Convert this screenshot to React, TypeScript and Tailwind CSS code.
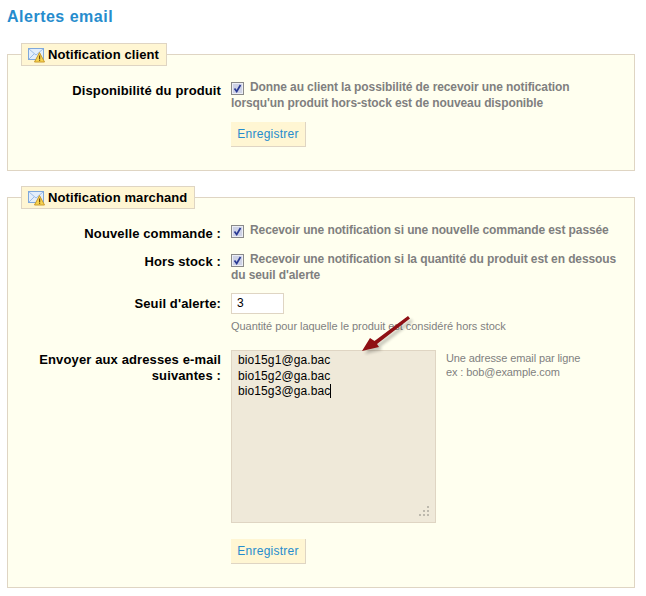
import React from 'react';

function MailWarnIcon() {
  return (
    <svg width="17" height="16" viewBox="0 0 17 16" className="shrink-0">
      <rect x="0.5" y="1.5" width="15" height="11" fill="#e3eefb" stroke="#7fa8dc" />
      <path d="M1 2l7 6 7-6M1 12l5-5M15 12l-5-5" fill="none" stroke="#9dbde8" strokeWidth="1" />
      <path d="M11.5 5.5L16.5 15H6.5z" fill="#f7d34f" stroke="#c99a2e" strokeWidth="1" strokeLinejoin="round" />
      <rect x="11" y="8.5" width="1.2" height="3.5" fill="#6b4a10" />
      <rect x="11" y="12.6" width="1.2" height="1.2" fill="#6b4a10" />
    </svg>
  );
}

function Checkbox() {
  return (
    <span className="inline-flex w-[13px] h-[13px] border border-[#8a8a8a] bg-[#ced2e6] shadow-[inset_0_0_0_1px_#eceef6] align-[-2px] mr-[6px] items-center justify-center">
      <svg width="9" height="9" viewBox="0 0 9 9">
        <path d="M1.5 4.5L3.7 7.5L7.5 1" fill="none" stroke="#2a3a94" strokeWidth="1.7" />
      </svg>
    </span>
  );
}

function SaveButton() {
  return (
    <button className="block h-[25px] w-[75px] bg-[#fff6d3] border-r border-b border-[#dfd5c3] text-[#268ccd] text-[12px] tracking-[0.25px] leading-[24px] text-center">
      Enregistrer
    </button>
  );
}

function Legend({ title }: { title: string }) {
  return (
    <legend className="ml-[13px] h-[23px] flex items-center gap-[3px] pl-[6px] pr-[7px] bg-[#fff6d3] border border-[#dfd5c3] text-black text-[13px] font-bold tracking-[0.1px]">
      <MailWarnIcon />
      {title}
    </legend>
  );
}

function Label({ children, className }: { children: React.ReactNode; className?: string }) {
  return (
    <div className={`w-[213px] shrink-0 text-right text-black text-[13px] font-bold leading-[16px] tracking-[0.12px] ${className ?? ''}`}>
      {children}
    </div>
  );
}

export default function App() {
  return (
    <div className="relative w-[646px] h-[596px] bg-white overflow-hidden font-['Liberation_Sans',Arial,sans-serif]">
      <h2 className="pl-[7px] pt-[8px] h-[43px] text-[16px] leading-[18px] font-bold text-[#268ccd] tracking-[0.5px]">
        Alertes email
      </h2>

      {/* Notification client */}
      <fieldset className="ml-[7px] w-[628px] h-[128px] border border-[#dfd5c3] bg-[#ffffef]">
        <Legend title="Notification client" />
        <div className="flex gap-[10px] pt-[13px]">
          <Label className="pt-[4px]">Disponibilité du produit</Label>
          <div>
            <p className="w-[380px] text-[12px] leading-[16px] font-bold tracking-[-0.1px] text-[#7f7f7f]">
              <Checkbox />
              Donne au client la possibilité de recevoir une notification lorsqu'un produit hors-stock est de nouveau disponible
            </p>
            <div className="mt-[11px]">
              <SaveButton />
            </div>
          </div>
        </div>
      </fieldset>

      {/* Notification marchand */}
      <fieldset className="ml-[7px] mt-[15px] w-[628px] h-[402px] border border-[#dfd5c3] bg-[#ffffef]">
        <Legend title="Notification marchand" />
        <div className="flex gap-[10px] pt-[13px]">
          <Label className="pt-[4px]">Nouvelle commande :</Label>
          <p className="text-[12px] leading-[16px] font-bold tracking-[-0.1px] text-[#7f7f7f]">
            <Checkbox />
            Recevoir une notification si une nouvelle commande est passée
          </p>
        </div>
        <div className="flex gap-[10px] pt-[9px]">
          <Label className="pt-[3px]">Hors stock :</Label>
          <p className="w-[392px] text-[12px] leading-[16px] font-bold tracking-[-0.1px] text-[#7f7f7f]">
            <Checkbox />
            Recevoir une notification si la quantité du produit est en dessous du seuil d'alerte
          </p>
        </div>
        <div className="flex gap-[10px] pt-[10px]">
          <Label className="pt-[3px]">Seuil d'alerte:</Label>
          <div>
            <div className="w-[53px] h-[21px] border border-[#dfd5c3] bg-white pl-[5px] text-[12px] leading-[19px] text-black">3</div>
            <p className="mt-[6px] text-[11px] leading-[13px] text-[#7f7f7f] tracking-[-0.05px]">
              Quantité pour laquelle le produit est considéré hors stock
            </p>
          </div>
        </div>
        <div className="flex gap-[10px] pt-[17px]">
          <Label className="pt-[2px]">
            Envoyer aux adresses e-mail
            <br />
            suivantes :
          </Label>
          <div>
            <div className="flex gap-[10px]">
              <div className="relative w-[205px] h-[173px] border border-[#dfd5c3] bg-[#efe9d9] pl-[6px] pt-[2px] text-[12px] leading-[15.5px] tracking-[0.1px] text-black">
                bio15g1@ga.bac
                <br />
                bio15g2@ga.bac
                <br />
                <span className="border-r border-black">bio15g3@ga.bac</span>
                {/* resize grip */}
                <svg width="13" height="13" viewBox="0 0 13 13" className="absolute right-[4px] bottom-[4px]">
                  <g fill="#bdb9ad">
                    <rect x="9" y="1" width="2" height="2" />
                    <rect x="5" y="5" width="2" height="2" />
                    <rect x="9" y="5" width="2" height="2" />
                    <rect x="1" y="9" width="2" height="2" />
                    <rect x="5" y="9" width="2" height="2" />
                    <rect x="9" y="9" width="2" height="2" />
                  </g>
                </svg>
              </div>
              <p className="text-[11px] leading-[14px] text-[#7f7f7f] tracking-[-0.1px] pt-[1px]">
                Une adresse email par ligne
                <br />
                ex : bob@example.com
              </p>
            </div>
            <div className="mt-[16px]">
              <SaveButton />
            </div>
          </div>
        </div>
      </fieldset>

      {/* annotation arrow drawn over the form */}
      <svg width="70" height="50" viewBox="0 0 70 50" className="absolute left-[350px] top-[310px]">
        <path d="M12 41L20 28L24.5 31L58 6L60 8.5L27 34L29 37z" fill="#000" opacity="0.22" transform="translate(3 3)" style={{ filter: 'blur(1.5px)' }} />
        <path d="M12 41L20 28L24.5 31L58 6L60 8.5L27 34L29 37z" fill="#8f1014" />
      </svg>
    </div>
  );
}
